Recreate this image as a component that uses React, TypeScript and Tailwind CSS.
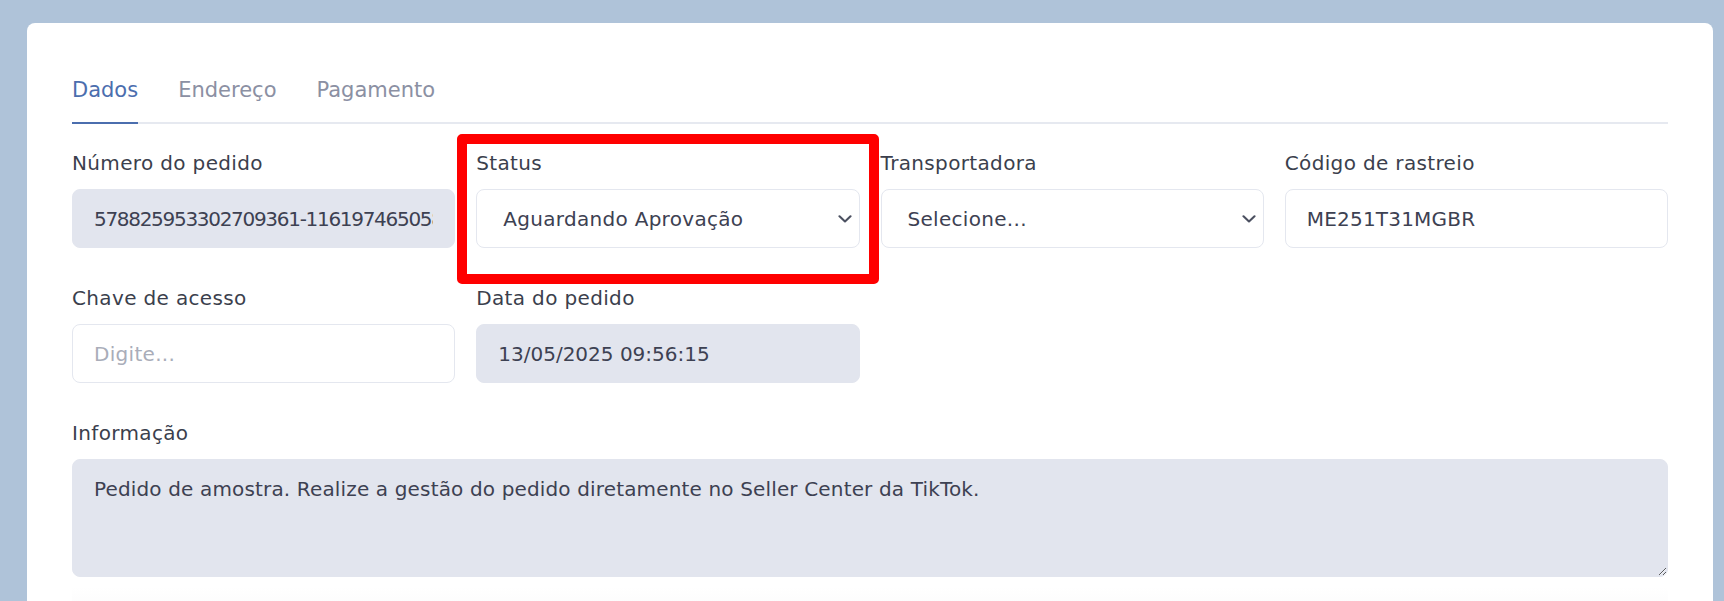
import { useState } from "react";

const tabs = ["Dados", "Endereço", "Pagamento"];

function Label({ children }: { children: React.ReactNode }) {
  return (
    <label className="mb-[11px] block text-[20px] leading-[30px] tracking-[0.35px] text-[#3b3f4d]">
      {children}
    </label>
  );
}

function Chevron() {
  return (
    <svg
      width="14"
      height="8"
      viewBox="0 0 14 8"
      fill="none"
      className="pointer-events-none absolute right-[8px] top-1/2 -translate-y-1/2"
    >
      <path d="M1.5 1.3L7 6.4L12.5 1.3" stroke="#4b5060" strokeWidth="2.1" strokeLinecap="round" strokeLinejoin="round" />
    </svg>
  );
}

export default function App() {
  const [tab, setTab] = useState("Dados");
  const [status, setStatus] = useState("aguardando");
  const [carrier, setCarrier] = useState("");
  const [tracking, setTracking] = useState("ME251T31MGBR");
  const [key, setKey] = useState("");

  const inputBase =
    "h-[59px] w-full rounded-lg border px-[21px] text-[20px] leading-[30px] text-[#3d4152] outline-none";

  return (
    <div className="h-[601px] overflow-hidden bg-[#afc3d9] pl-[27px] pr-[11px] pt-[23px] font-['DejaVu_Sans',sans-serif]">
      <div className="h-[700px] rounded-lg bg-white px-[45px] pt-[52px]">
        {/* Tabs */}
        <div className="flex gap-[40px] border-b-2 border-[#e6e9f0]">
          {tabs.map((t) => (
            <button
              key={t}
              onClick={() => setTab(t)}
              className={
                "-mb-[2px] border-b-2 pb-[17px] text-[21px] leading-[30px] " +
                (tab === t
                  ? "border-[#4b6eae] text-[#4b6eae]"
                  : "border-transparent text-[#8b90a3]")
              }
            >
              {t}
            </button>
          ))}
        </div>

        {/* Fields */}
        <div className="mt-[24px] grid grid-cols-4 gap-x-[21px] gap-y-[35px]">
          <div>
            <Label>Número do pedido</Label>
            <input
              readOnly
              value="578825953302709361-1161974650581"
              className={inputBase + " border-[#e2e5ee] bg-[#e2e5ee] tracking-[-1.3px]"}
            />
          </div>

          <div className="relative">
            <Label>Status</Label>
            <div className="relative">
              <select
                value={status}
                onChange={(e) => setStatus(e.target.value)}
                className={inputBase + " appearance-none border-[#e4e7ef] bg-white pl-[26px] pr-[40px] tracking-[0.3px]"}
              >
                <option value="aguardando">Aguardando Aprovação</option>
                <option value="aprovado">Aprovado</option>
                <option value="enviado">Enviado</option>
              </select>
              <Chevron />
            </div>
            {/* destaque */}
            <div className="pointer-events-none absolute -left-[19px] -top-[14px] h-[150px] w-[422px] rounded-[5px] border-[10px] border-[#ff0000]" />
          </div>

          <div>
            <Label>Transportadora</Label>
            <div className="relative">
              <select
                value={carrier}
                onChange={(e) => setCarrier(e.target.value)}
                className={inputBase + " appearance-none border-[#e4e7ef] bg-white pl-[26px] pr-[40px] tracking-[0.3px]"}
              >
                <option value="">Selecione...</option>
                <option value="correios">Correios</option>
                <option value="jadlog">Jadlog</option>
              </select>
              <Chevron />
            </div>
          </div>

          <div>
            <Label>Código de rastreio</Label>
            <input
              value={tracking}
              onChange={(e) => setTracking(e.target.value)}
              className={inputBase + " border-[#e4e7ef] bg-white tracking-[0.2px]"}
            />
          </div>

          <div>
            <Label>Chave de acesso</Label>
            <input
              value={key}
              onChange={(e) => setKey(e.target.value)}
              placeholder="Digite..."
              className={inputBase + " border-[#e4e7ef] bg-white tracking-[0.3px] placeholder:text-[#a9adb9]"}
            />
          </div>

          <div>
            <Label>Data do pedido</Label>
            <input
              readOnly
              value="13/05/2025 09:56:15"
              className={inputBase + " border-[#e2e5ee] bg-[#e2e5ee]"}
            />
          </div>

          <div className="col-span-4">
            <Label>Informação</Label>
            <textarea
              readOnly
              value="Pedido de amostra. Realize a gestão do pedido diretamente no Seller Center da TikTok."
              className="block h-[118px] w-full rounded-lg border border-[#e2e5ee] bg-[#e2e5ee] px-[21px] py-[14px] text-[20px] leading-[30px] tracking-[0.15px] text-[#3d4152] outline-none"
            />
          </div>
        </div>

        {/* Rodapé */}
        <div className="mt-[10px] h-[40px] bg-gradient-to-b from-white to-[#f8f8f9]" />
      </div>
    </div>
  );
}
